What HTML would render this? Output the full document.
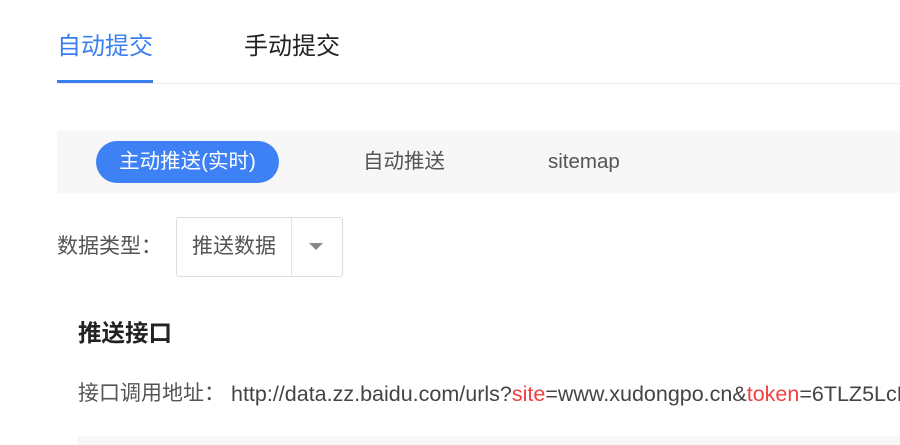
<!DOCTYPE html>
<html><head><meta charset="utf-8"><style>
body{margin:0;width:900px;height:445px;overflow:hidden;background:#fff;font-family:"Liberation Sans","Noto Sans CJK SC",sans-serif;position:relative}
.a{position:absolute;white-space:nowrap}
</style></head><body>
<div class="a" style="left:57px;top:31px;font-size:24px;color:#3a7ff0;line-height:32px">自动提交</div>
<div class="a" style="left:244px;top:31px;font-size:24px;color:#222;line-height:32px">手动提交</div>
<div class="a" style="left:57px;top:83px;width:843px;height:1px;background:#ececec"></div>
<div class="a" style="left:57px;top:80px;width:96px;height:3px;background:#3a7ff0"></div>
<div class="a" style="left:57px;top:131px;width:843px;height:62px;background:#f7f7f7"></div>
<div class="a" style="left:96px;top:141px;width:183px;height:42px;border-radius:21px;background:#3d81f5;color:#fff;font-size:20.5px;line-height:42px;text-align:center">主动推送(实时)</div>
<div class="a" style="left:363px;top:141px;font-size:20.5px;line-height:42px;color:#555">自动推送</div>
<div class="a" style="left:548px;top:141px;font-size:20.5px;line-height:42px;color:#555">sitemap</div>
<div class="a" style="left:57px;top:233px;font-size:21px;line-height:28px;color:#555">数据类型：</div>
<div class="a" style="left:176px;top:217px;width:165px;height:58px;border:1px solid #ddd;border-radius:3px"></div>
<div class="a" style="left:291px;top:218px;width:1px;height:58px;background:#e3e3e3"></div>
<div class="a" style="left:192px;top:233px;font-size:21px;line-height:28px;color:#555">推送数据</div>
<div class="a" style="left:309px;top:243px;width:0;height:0;border-left:7px solid transparent;border-right:7px solid transparent;border-top:7px solid #888"></div>
<div class="a" style="left:78px;top:318px;font-size:23.5px;line-height:30px;color:#222;font-weight:bold">推送接口</div>
<div class="a" style="left:78px;top:380px;font-size:21px;line-height:28px;color:#555">接口调用地址：</div>
<div class="a" style="left:231px;top:380px;width:669px;overflow:hidden;font-size:21.5px;line-height:28px;color:#444">http://data.zz.baidu.com/urls?<span style="color:#f04040">site</span>=www.xudongpo.cn&amp;<span style="color:#f04040">token</span>=6TLZ5LcHxxxx</div>
<div class="a" style="left:78px;top:436px;width:822px;height:9px;background:#f7f7f7"></div>
</body></html>
